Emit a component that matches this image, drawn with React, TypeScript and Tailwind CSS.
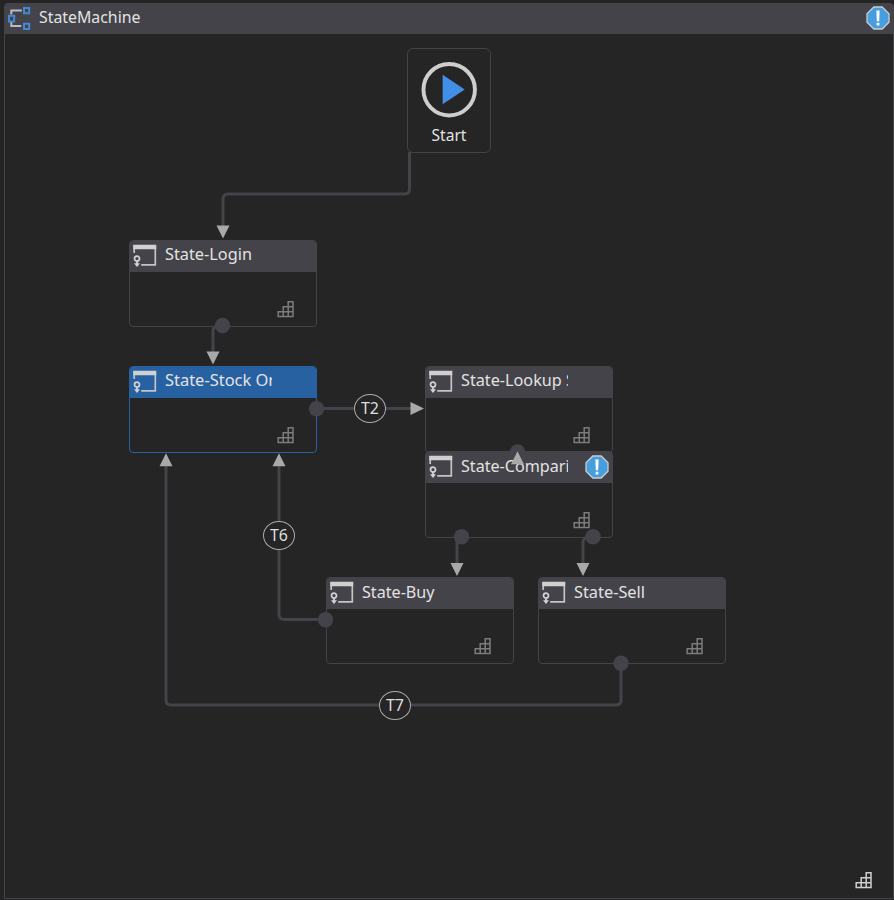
import React from "react";

const FONT = "font-['Noto_Sans','Open_Sans',sans-serif]";

function StateIcon() {
  return (
    <svg className="ml-[3px] mt-[3px] h-[24px] w-[24px] shrink-0" viewBox="0 0 24 24" fill="none">
      <path d="M1.200 1v8M22.300 1v19.900H8.200" stroke="#c4c4c6" strokeWidth="1.700" />
      <path d="M.3 .8h22.900v4.400H.3z" fill="#d0d0d1" />
      <circle cx="4" cy="14.600" r="2.500" stroke="#d2d2d3" strokeWidth="1.700" />
      <path d="M4 17v3" stroke="#d2d2d3" strokeWidth="1.800" />
      <path d="M1 19.300h6L4 23z" fill="#d2d2d3" />
    </svg>
  );
}

function Grip({ color }: { color: string }) {
  return (
    <svg className="h-[17px] w-[17px]" viewBox="0 0 17 17" fill="none" stroke={color} strokeWidth="1.500">
      <path d="M1.200 10.700h5v4.900h-5zM6.200 10.700h5v4.900h-5zM11.200 10.700H16v4.900h-4.800zM6.200 5.700h5v5h-5zM11.200 5.700H16v5h-4.800zM11.200 .8H16v4.900h-4.800z" />
    </svg>
  );
}

function Warning() {
  return (
    <svg className="h-[24px] w-[24px]" viewBox="0 0 24 24">
      <path d="M7.800 1h8.400L23 7.800v8.400L16.200 23H7.800L1 16.200V7.800z" fill="#479edf" stroke="#c9cdd0" strokeWidth="1.300" />
      <path d="M10.400 4.500h3.200l-.4 10.800h-2.400zM10.600 16.700h2.800v2.800h-2.800z" fill="#fff" />
    </svg>
  );
}

interface StateProps {
  name: string;
  place: string;
  textWidth: string;
  baseline?: number;
  selected?: boolean;
  warning?: boolean;
}

function StateNode({ name, place, textWidth, baseline = 19, selected, warning }: StateProps) {
  return (
    <section
      className={`absolute flex h-[87px] w-[188px] flex-col overflow-hidden rounded-[4px] border bg-[#252525] ${place} ${
        selected ? "border-[#2861a1]" : "border-[#444349]"
      }`}
    >
      <header className={`flex h-[31px] shrink-0 ${selected ? "bg-[#2861a1]" : "bg-[#444349]"}`}>
        <StateIcon />
        <div className="ml-[8px] w-[107px] overflow-hidden">
          <svg className="block h-[31px] w-[180px]">
            <text x="0" y={baseline} fontSize="16.500" fill="#e2e2e3" textLength={textWidth} lengthAdjust="spacingAndGlyphs">
              {name}
            </text>
          </svg>
        </div>
        {warning && (
          <div className="ml-[17px] mt-[3px]">
            <Warning />
          </div>
        )}
      </header>
      <div className="flex flex-1 items-end justify-end pb-[8px] pr-[22px]">
        <Grip color="#7c7c7c" />
      </div>
    </section>
  );
}

const STATES: StateProps[] = [
  { name: "State-Login", place: "left-[129px] top-[240px]", textWidth: "87" },
  { name: "State-Stock Order", place: "left-[129px] top-[366px]", textWidth: "136", selected: true },
  { name: "State-Lookup Stock", place: "left-[425px] top-[366px]", textWidth: "146" },
  { name: "State-Comparison", place: "left-[425px] top-[451px]", textWidth: "136", baseline: 20, warning: true },
  { name: "State-Buy", place: "left-[326px] top-[577px]", textWidth: "72.500", baseline: 20 },
  { name: "State-Sell", place: "left-[538px] top-[577px]", textWidth: "71", baseline: 20 },
];

const LABELS = [
  { text: "T2", place: "left-[354px] top-[394px]" },
  { text: "T6", place: "left-[263px] top-[521px]" },
  { text: "T7", place: "left-[379px] top-[691px]" },
];

function Connectors() {
  return (
    <svg className="absolute left-0 top-0 h-[900px] w-[894px]" viewBox="0 0 894 900">
      <g fill="none" stroke="#444349" strokeWidth="3">
        <path d="M409.500 152V189q0 5-5 5H228q-5 0-5 5V228" />
        <path d="M222 326h-4q-5 0-5 5v22" />
        <path d="M317 408.500H413" />
        <path d="M461 537q-4 0-4 5v23M593 537h-4q-6 0-6 6v22" />
        <path d="M326 619.500H284q-5 0-5-5V464" />
        <path d="M621 663v37q0 5-5 5H171q-5 0-5-5V464" />
      </g>
      <g fill="#444349">
        <circle cx="222.500" cy="325.500" r="7.700" />
        <circle cx="316.500" cy="408.700" r="7.700" />
        <path d="M509.800 452a7.700 7.700 0 0 1 15.400 0z" />
        <circle cx="461.500" cy="536.700" r="7.700" />
        <circle cx="593" cy="536.700" r="7.700" />
        <circle cx="325.500" cy="619.700" r="7.700" />
        <circle cx="621" cy="663.200" r="7.700" />
      </g>
      <path
        fill="#a9a9a9"
        d="M216.500 225.500h13l-6.500 13zM206.500 351.500h13l-6.500 13zM410.500 402v13l13.500-6.500zM511 464.300h13l-6.500-13zM450.500 563h13l-6.500 13zM576.500 563h13l-6.500 13zM272.500 466.300h13l-6.500-13zM159.500 466.300h13l-6.500-13z"
      />
    </svg>
  );
}

export default function App() {
  return (
    <main className={`flex h-[900px] w-[894px] flex-col overflow-hidden bg-[#242424] pb-[1px] pl-[4px] pt-[3px] ${FONT}`}>
      <div className="flex flex-1 flex-col rounded-t-[4px] border border-[#444349] bg-[#252525]">
        <header className="flex h-[30px] shrink-0 items-center bg-[#444349]">
          <svg className="mb-[2px] ml-[2px] h-[24px] w-[24px]" viewBox="0 0 24 24" fill="none">
            <path d="M4.300 8.500V4.500h10.500M4.300 15.500V20h10" stroke="#bcbcbe" strokeWidth="2" />
            <path d="M2 9.700h5.200v5.700H2zM17 2h5.200v5.200H17zM17 17.700h5.200v5.200H17z" stroke="#4189d5" strokeWidth="2" />
          </svg>
          <svg className="ml-[8px] h-[30px] w-[120px]">
            <text x="0" y="19" fontSize="16.500" fill="#e2e2e3" textLength="101.500" lengthAdjust="spacingAndGlyphs">
              StateMachine
            </text>
          </svg>
          <div className="mb-[2px] ml-auto mr-[3px]">
            <Warning />
          </div>
        </header>
        <div className="flex flex-1 items-end justify-end pb-[9px] pr-[21px]">
          <Grip color="#cecece" />
        </div>
      </div>
      <section className="absolute left-[407px] top-[48px] flex h-[105px] w-[84px] flex-col items-center rounded-[6px] border border-[#444349] bg-[#252525] pt-[13px]">
        <svg className="h-[57px] w-[57px]" viewBox="0 0 57 57">
          <circle cx="28.200" cy="28.200" r="26.200" fill="none" stroke="#cecece" strokeWidth="4" />
          <path d="M21.500 13v30l22.500-15z" fill="#418fe7" />
        </svg>
        <svg className="h-[34px] w-[38px] shrink-0">
          <text x="1.500" y="23" fontSize="16.500" fill="#e2e2e3" textLength="35" lengthAdjust="spacingAndGlyphs">
            Start
          </text>
        </svg>
      </section>
      {STATES.map((state) => (
        <StateNode key={state.name} {...state} />
      ))}
      <Connectors />
      {LABELS.map(({ text, place }) => (
        <div key={text} className={`absolute flex h-[29px] w-[32px] items-center justify-center rounded-[50%] border border-[#aaa] bg-[#252525] ${place}`}>
          <svg className="h-[27px] w-[18px]">
            <text x="0" y="19" fontSize="16.500" fill="#dededf" textLength="18" lengthAdjust="spacingAndGlyphs">
              {text}
            </text>
          </svg>
        </div>
      ))}
    </main>
  );
}
